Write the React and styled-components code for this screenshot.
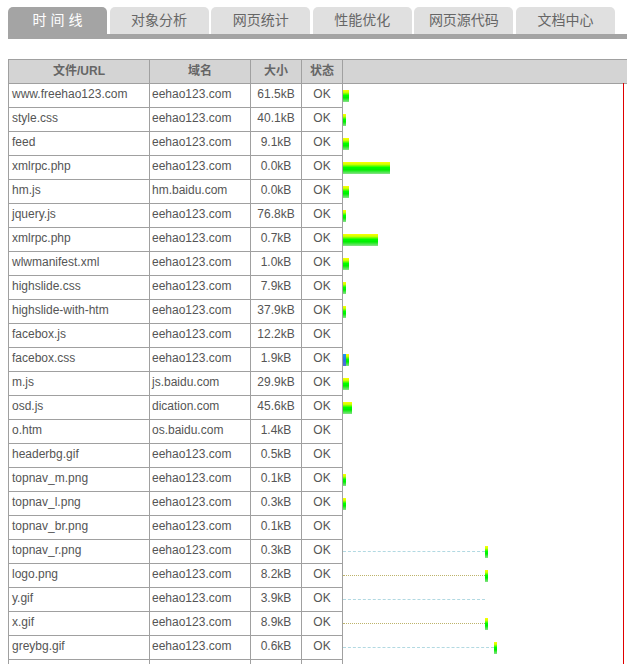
import React from 'react';
import styled, { createGlobalStyle } from 'styled-components';

const GlobalStyle = createGlobalStyle`
    html, body { margin: 0; padding: 0; overflow: hidden; background: #fff; }
    body { font-family: "Liberation Sans", "Noto Sans CJK SC", sans-serif; }
`

const Page = styled.div`
    width: 680px;
    padding: 7px 0 0 8px;
`

const TabBar = styled.div`
    display: flex;
    gap: 2.6px;
    height: 27px;
`

const Tab = styled.div`
    width: 99px;
    height: 27px;
    border-radius: 5px 5px 0 0;
    background: ${p => p.$active ? '#a4a4a4' : '#e0e0e0'};
    color: ${p => p.$active ? '#fff' : '#666'};
    font-family: "Liberation Sans", "Noto Sans CJK SC", sans-serif;
    font-size: 14px;
    line-height: 27px;
    text-align: center;
`

const Rule = styled.div`
    height: 5px;
    background: #a4a4a4;
    margin-bottom: 20px;
`

const Table = styled.div`
    position: relative;
    border-left: 1px solid #a0a0a0;
    border-top: 1px solid #a0a0a0;
    font-size: 12px;
    color: #555;
`

const Row = styled.div`
    display: grid;
    grid-template-columns: 141px 101px 51px 41px 1fr;
    height: 24px;
`

const Cell = styled.div`
    box-sizing: border-box;
    height: 24px;
    border-right: 1px solid #a0a0a0;
    border-bottom: 1px solid #a0a0a0;
    padding-left: ${p => p.$pad || 0}px;
    text-align: ${p => p.$align || 'left'};
    line-height: 21px;
    white-space: nowrap;
    overflow: hidden;
`

const HeadCell = styled(Cell)`
    background: #d4d4d4;
    color: #666;
    font-weight: bold;
    text-align: center;
    line-height: 23px;
`

const HeadFill = styled.div`
    box-sizing: border-box;
    height: 24px;
    background: #d4d4d4;
    border-bottom: 1px solid #a0a0a0;
`

const TimeCell = styled.div`
    display: flex;
    align-items: center;
    height: 23px;
`

const Lead = styled.div`
    height: 0;
    border-top: 1px ${p => p.$dotted ? 'dotted #bdb36a' : 'dashed #b2d9e2'};
`

const Bar = styled.div`
    height: 12px;
    background: ${p => p.$blue
        ? 'linear-gradient(#1a9cf0, #2f6fe0 50%, #5a70d0)'
        : 'linear-gradient(#ffff00, #ccff00 20%, #00ff00 45%, #00ee00 65%, #8ae08a)'};
`

const Marker = styled.div`
    position: absolute;
    left: 614px;
    top: 23px;
    bottom: 0;
    width: 1px;
    background: #e00000;
`

const tabs = ['时 间 线', '对象分析', '网页统计', '性能优化', '网页源代码', '文档中心'];

// [file, domain, size, bars, lead, blue]
const rows = [
    ['www.freehao123.com', 'eehao123.com', '61.5kB', [6]],
    ['style.css', 'eehao123.com', '40.1kB', [3]],
    ['feed', 'eehao123.com', '9.1kB', [6]],
    ['xmlrpc.php', 'eehao123.com', '0.0kB', [47]],
    ['hm.js', 'hm.baidu.com', '0.0kB', [6]],
    ['jquery.js', 'eehao123.com', '76.8kB', [3]],
    ['xmlrpc.php', 'eehao123.com', '0.7kB', [35]],
    ['wlwmanifest.xml', 'eehao123.com', '1.0kB', [6]],
    ['highslide.css', 'eehao123.com', '7.9kB', [3]],
    ['highslide-with-htm', 'eehao123.com', '37.9kB', [3]],
    ['facebox.js', 'eehao123.com', '12.2kB', []],
    ['facebox.css', 'eehao123.com', '1.9kB', [3], 0, 3],
    ['m.js', 'js.baidu.com', '29.9kB', [6]],
    ['osd.js', 'dication.com', '45.6kB', [9]],
    ['o.htm', 'os.baidu.com', '1.4kB', []],
    ['headerbg.gif', 'eehao123.com', '0.5kB', []],
    ['topnav_m.png', 'eehao123.com', '0.1kB', [3]],
    ['topnav_l.png', 'eehao123.com', '0.3kB', [3]],
    ['topnav_br.png', 'eehao123.com', '0.1kB', []],
    ['topnav_r.png', 'eehao123.com', '0.3kB', [3], 142],
    ['logo.png', 'eehao123.com', '8.2kB', [3], 142],
    ['y.gif', 'eehao123.com', '3.9kB', [], 142],
    ['x.gif', 'eehao123.com', '8.9kB', [3], 142],
    ['greybg.gif', 'eehao123.com', '0.6kB', [3], 151],
];

export default function App(){
    return(
        <Page>
            <GlobalStyle />
            <TabBar>
                {tabs.map((t, i) => (
                    <Tab key={t} $active={i === 0}>{t}</Tab>
                ))}
            </TabBar>
            <Rule />
            <Table>
                <Row>
                    <HeadCell>文件/URL</HeadCell>
                    <HeadCell>域名</HeadCell>
                    <HeadCell>大小</HeadCell>
                    <HeadCell>状态</HeadCell>
                    <HeadFill />
                </Row>
                {rows.map(([file, domain, size, bars, lead, blue], i) => (
                    <Row key={i}>
                        <Cell $pad={3}>{file}</Cell>
                        <Cell $pad={2}>{domain}</Cell>
                        <Cell $align="center">{size}</Cell>
                        <Cell $align="center">OK</Cell>
                        <TimeCell>
                            {lead ? <Lead $dotted={i % 2 === 0} style={{width: lead}} /> : null}
                            {blue ? <Bar $blue style={{width: blue}} /> : null}
                            {bars.map((w, j) => <Bar key={j} style={{width: w}} />)}
                        </TimeCell>
                    </Row>
                ))}
                <Row>
                    <Cell />
                    <Cell />
                    <Cell />
                    <Cell />
                    <TimeCell />
                </Row>
                <Marker />
            </Table>
        </Page>
    );
}
